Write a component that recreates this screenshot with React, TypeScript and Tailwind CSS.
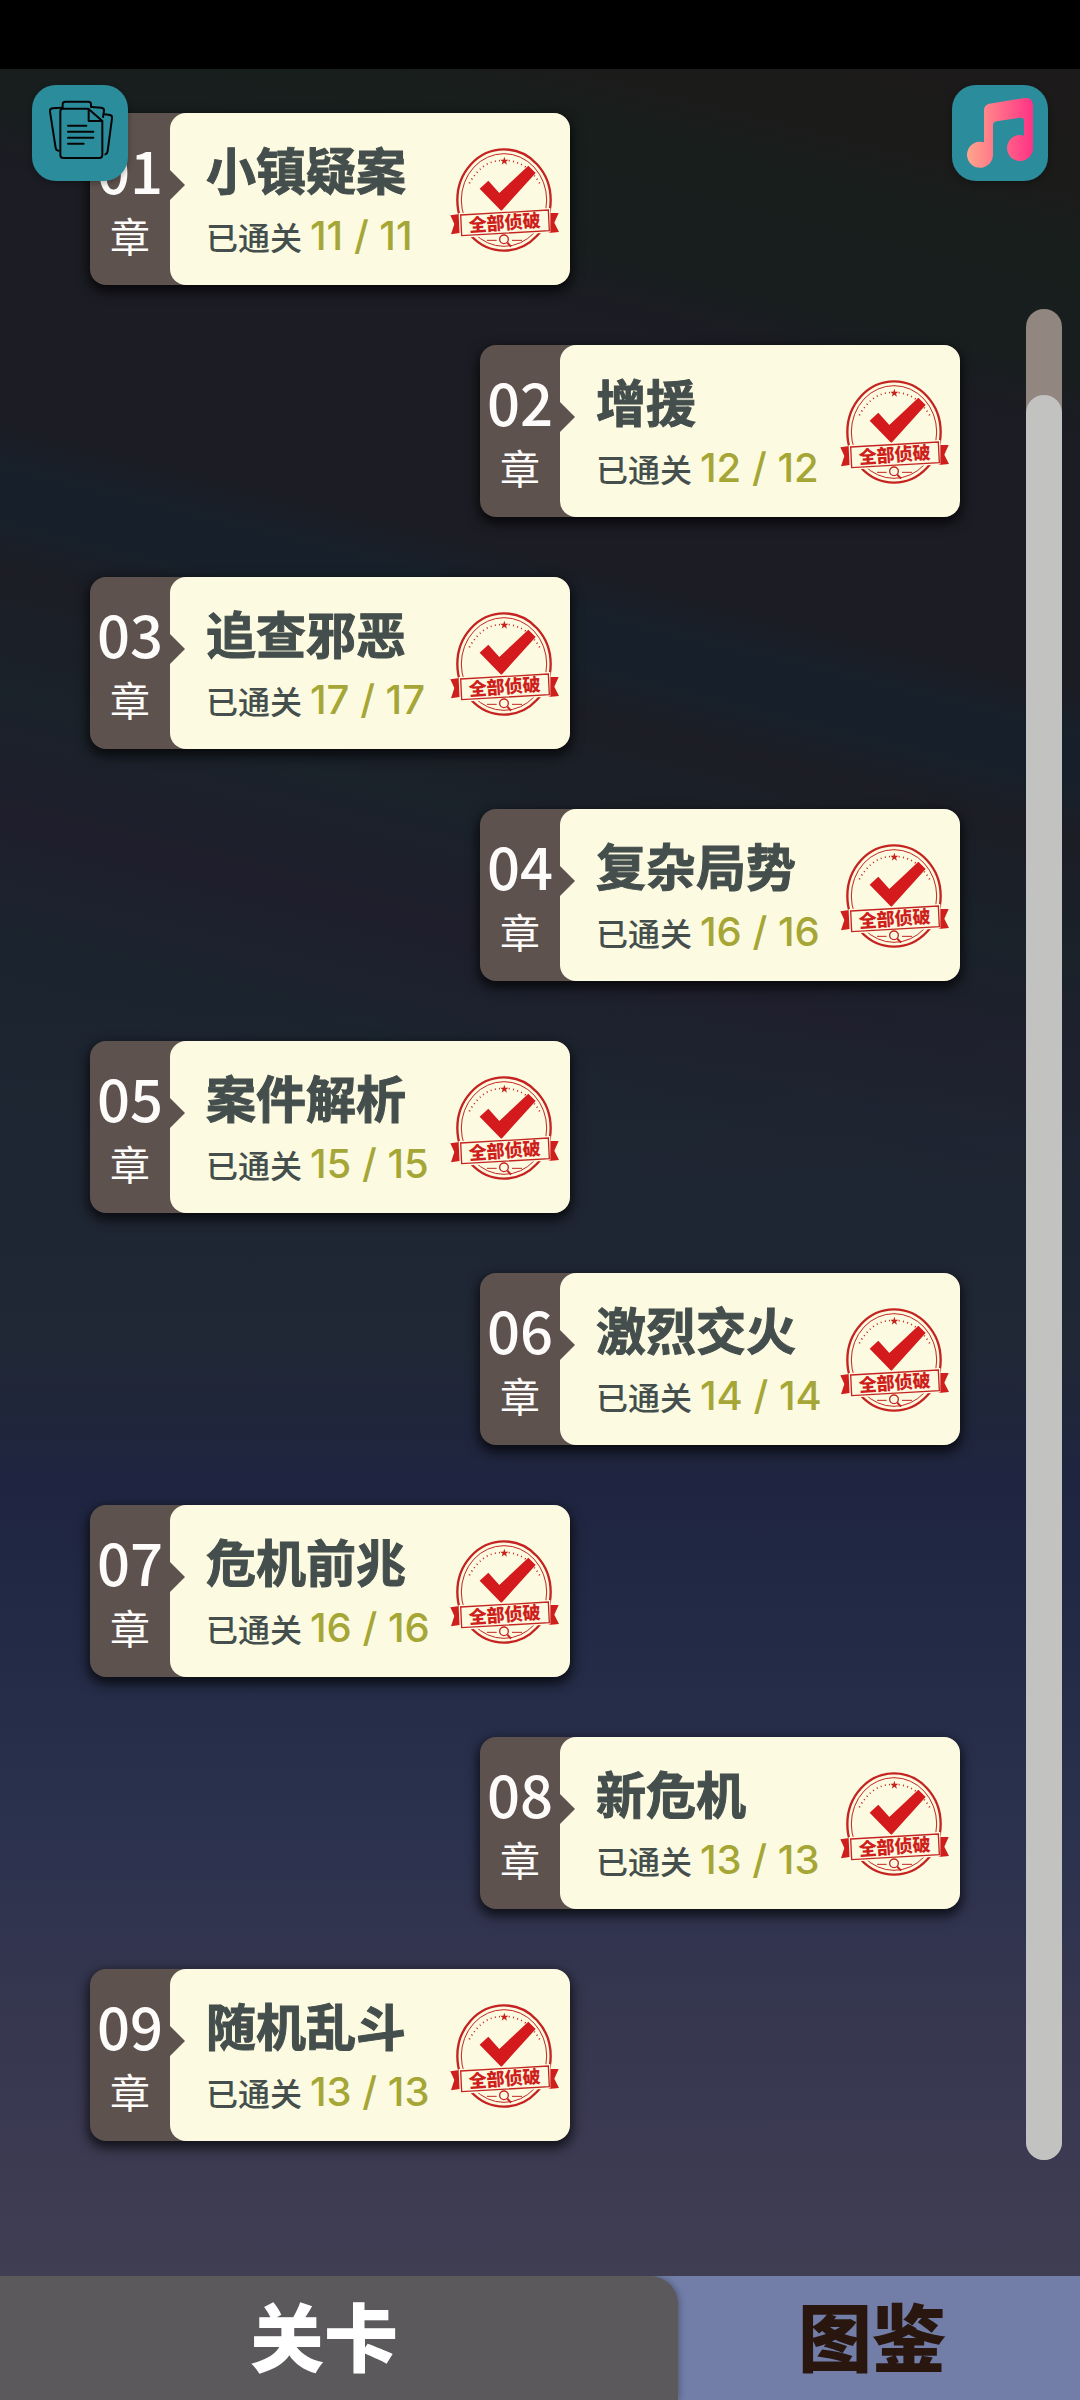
import React from "react";

type Chapter = { id: string; title: string; done: number; total: number };

const chapters: Chapter[] = [
  { id: "01", title: "小镇疑案", done: 11, total: 11 },
  { id: "02", title: "增援", done: 12, total: 12 },
  { id: "03", title: "追查邪恶", done: 17, total: 17 },
  { id: "04", title: "复杂局势", done: 16, total: 16 },
  { id: "05", title: "案件解析", done: 15, total: 15 },
  { id: "06", title: "激烈交火", done: 14, total: 14 },
  { id: "07", title: "危机前兆", done: 16, total: 16 },
  { id: "08", title: "新危机", done: 13, total: 13 },
  { id: "09", title: "随机乱斗", done: 13, total: 13 },
];

function FilesIcon() {
  return (
    <svg viewBox="36 30 288 288" className="size-24" fill="none" stroke="#050505" strokeWidth="6" strokeLinejoin="round" strokeLinecap="round" aria-hidden="true">
      <path d="M128 101H205L247 138V240Q247 249 238 249H130Q121 249 121 240V109Q121 101 128 101Z" />
      <path d="M206 103V138H245" />
      <path d="M128 98V88Q128 80 136 80H205Q213 80 213 88V96" />
      <path d="M215 96L244 98Q253 99 252 108L249 126" />
      <path d="M254 118L270 120Q277 121 276 130L263 228Q262 236 256 238" />
      <path d="M124 98L97 100Q89 101 90 110L107 219Q108 227 116 227" />
      <path d="M144 152H199M144 170H220M144 188H220M144 206H191" />
    </svg>
  );
}

function MusicIcon() {
  return (
    <svg viewBox="156 75 288 288" className="size-24" aria-hidden="true">
      <defs>
        <linearGradient id="note" x1="201" y1="0" x2="399" y2="0" gradientUnits="userSpaceOnUse">
          <stop offset="0" stopColor="#ffa68c" />
          <stop offset="1" stopColor="#ff3285" />
        </linearGradient>
      </defs>
      <path
        fill="url(#note)"
        d="M252 151Q252 135 268 131L374 114Q399 111 399 137V266A39 39 0 1 1 372 227V183Q372 172 361 173L290 184Q279 186 279 196V285A39 39 0 1 1 252 247Z"
      />
    </svg>
  );
}

function SolvedStamp() {
  return (
    <svg viewBox="30 51 330 318" className="h-[106px] w-[110px]" role="img" aria-label="全部侦破">
      <g fill="none" stroke="#c4231f">
        <ellipse cx="192" cy="210" rx="140" ry="152" strokeWidth="7" />
        <ellipse cx="192" cy="210" rx="128" ry="139" strokeWidth="3" />
        <path d="M88 160Q125 94 180 92" strokeWidth="5" strokeDasharray="3 10" />
        <path d="M206 92Q264 98 300 162" strokeWidth="5" strokeDasharray="3 10" />
      </g>
      <path fill="#c4231f" d="M193 80L196 89L205 89L198 95L201 104L193 98L185 104L188 95L181 89L190 89Z" />
      <path fill="#d41a1c" d="M119 176L145 152L178 189L265 107L287 129L184 243Z" />
      <path fill="#cf1f1d" d="M31 256L64 251V308L33 313L43 282Z" />
      <path fill="#cf1f1d" d="M326 249L356 249L343 278L357 306L326 309Z" />
      <path fill="#fcfbe2" stroke="#fcfbe2" strokeWidth="12" d="M62 255L325 240V302L65 317Z" />
      <path fill="#fcfbe2" stroke="#c4231f" strokeWidth="4" d="M62 255L325 240L328 302L65 317Z" />
      <text
        x="194"
        y="298"
        textAnchor="middle"
        transform="rotate(-4 194 280)"
        fill="#cf1f1d"
        className="font-['Noto_Sans_CJK_SC',sans-serif] text-[54px] font-black"
      >
        全部侦破
      </text>
      <g stroke="#c4231f" fill="none">
        <path d="M141 331H170M216 331H246" strokeWidth="3" />
        <circle cx="192" cy="328" r="13" strokeWidth="4" />
        <path d="M202 338L213 350" strokeWidth="6" />
      </g>
    </svg>
  );
}

function ChapterCard({ chapter }: { chapter: Chapter }) {
  return (
    <a
      href={"#chapter-" + chapter.id}
      className="relative flex h-[172px] w-[480px] rounded-2xl bg-[#5e524e] shadow-[0_5px_12px_2px_rgba(0,0,0,0.7)] odd:self-start even:self-end"
    >
      <div className="flex w-20 flex-col items-center gap-4 pt-[26px] text-[#fdfcfb]">
        <span className="text-[58px] leading-[60px] font-medium">{chapter.id}</span>
        <span className="text-[40px] leading-none">章</span>
      </div>
      <div className="flex flex-1 flex-col gap-[22px] rounded-2xl bg-[#fcfbe2] pt-[30px] pl-9">
        <h2 className="text-[50px] leading-none font-bold text-[#444e4c] [-webkit-text-stroke:1px_#444e4c]">{chapter.title}</h2>
        <p className="flex items-baseline gap-2">
          <span className="text-[32px] leading-none font-medium text-[#444e4c]">已通关</span>
          <span className="font-['Inter',sans-serif] text-[40px] leading-[42px] font-medium text-[#a6a637]">
            {chapter.done} / {chapter.total}
          </span>
        </p>
      </div>
      <svg viewBox="0 0 15 30" className="absolute top-[57px] left-20 h-[30px] w-[15px]" aria-hidden="true">
        <path d="M0 0L15 15L0 30Z" fill="#5e524e" />
      </svg>
      <div className="absolute top-[34px] right-[10px]">
        <SolvedStamp />
      </div>
    </a>
  );
}

export default function App() {
  return (
    <div className="flex min-h-screen flex-col bg-black font-['Noto_Sans_CJK_SC',sans-serif]">
      <div className="h-[69px]" />
      <main className="relative flex flex-1 bg-[linear-gradient(180deg,transparent_42%,#1f2633_52%,#202735_58%,#1f2540_64%,#222a45_71%,#2b324e_80%,#36364f_88%,#3b3a52_94%,#3f3e52_100%),linear-gradient(194deg,#1c1a1a_0%,#1b1b1a_5%,#171f1d_8%,#181e1e_12%,#1c1c24_15%,#1c1c24_25%,#17202a_27%,#17202a_29%,#1c1d25_31%,#1a222a_36%,#1f1e2c_41%,#1b242e_46%,#1e2534_60%)]">
        <header className="absolute inset-x-0 top-0 z-10 flex justify-between px-8 pt-4">
          <button type="button" aria-label="档案" className="rounded-3xl bg-[#2b8d9c] shadow-[0_2px_6px_rgba(0,0,0,0.3)]">
            <FilesIcon />
          </button>
          <button type="button" aria-label="音乐" className="rounded-3xl bg-[#2b8d9c] shadow-[0_2px_6px_rgba(0,0,0,0.3)]">
            <MusicIcon />
          </button>
        </header>
        <div className="flex flex-1 flex-col gap-[60px] pt-11 pr-[66px] pb-[135px] pl-[90px]">
          {chapters.map((c) => (
            <ChapterCard key={c.id} chapter={c} />
          ))}
        </div>
        <div className="mt-60 mr-[18px] mb-[116px] flex w-9 flex-col rounded-full bg-[#928680] pt-[86px]">
          <div className="flex-1 rounded-full bg-[#c2c2c0]" />
        </div>
      </main>
      <nav className="flex h-[124px] bg-[#727ea8] text-[74px] leading-none font-black">
        <button type="button" aria-current="page" className="w-[62.8%] rounded-tr-[28px] bg-[#5b595b] pr-[30px] pb-2 text-white shadow-[2px_0_6px_rgba(0,0,0,0.25)]">
          关卡
        </button>
        <button type="button" className="flex-1 pr-[14px] pb-2 text-[#28160f]">
          图鉴
        </button>
      </nav>
    </div>
  );
}
